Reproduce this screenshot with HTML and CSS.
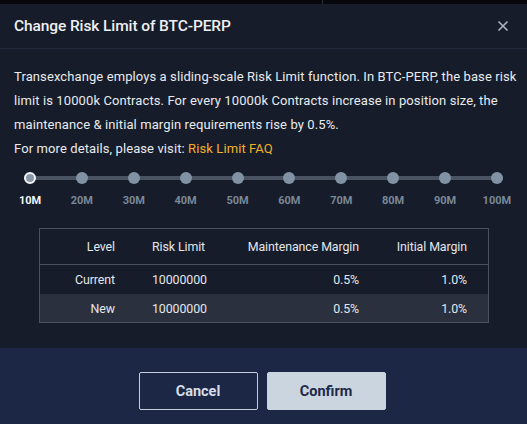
FILE: index.html
```html
<!DOCTYPE html>
<html>
<head>
<meta charset="utf-8">
<link rel="stylesheet" href="styles.css">
</head>
<body>
<div class="topbar"><div class="topbar-line"></div></div>
<div class="dialog">
  <div class="header">
    <div class="title">Change Risk Limit of BTC-PERP</div>
    <svg class="close" width="12" height="12" viewBox="0 0 12 12"><path d="M1.5 1.5 L10.5 10.5 M10.5 1.5 L1.5 10.5" stroke="#aab4c2" stroke-width="1.6" fill="none"/></svg>
  </div>
  <div class="body">
    <p class="desc">Transexchange employs a sliding-scale Risk Limit function. In BTC-PERP, the base risk limit is 10000k Contracts. For every 10000k Contracts increase in position size, the maintenance &amp; initial margin requirements rise by 0.5%.<br>For more details, please visit: <span class="link">Risk Limit FAQ</span></p>
    <div class="slider">
      <div class="track">
        <span class="dot active"></span><span class="dot"></span><span class="dot"></span><span class="dot"></span><span class="dot"></span><span class="dot"></span><span class="dot"></span><span class="dot"></span><span class="dot"></span><span class="dot"></span>
      </div>
      <div class="labels">
        <span class="lbl active">10M</span><span class="lbl">20M</span><span class="lbl">30M</span><span class="lbl">40M</span><span class="lbl">50M</span><span class="lbl">60M</span><span class="lbl">70M</span><span class="lbl">80M</span><span class="lbl">90M</span><span class="lbl">100M</span>
      </div>
    </div>
    <div class="table">
      <div class="row head">
        <div class="c1">Level</div><div class="c2">Risk Limit</div><div class="c3">Maintenance Margin</div><div class="c4">Initial Margin</div>
      </div>
      <div class="row">
        <div class="c1">Current</div><div class="c2">10000000</div><div class="c3">0.5%</div><div class="c4">1.0%</div>
      </div>
      <div class="row alt">
        <div class="c1">New</div><div class="c2">10000000</div><div class="c3">0.5%</div><div class="c4">1.0%</div>
      </div>
    </div>
  </div>
  <div class="footer">
    <button class="btn cancel">Cancel</button>
    <button class="btn confirm">Confirm</button>
  </div>
</div>
</body>
</html>
```
FILE: styles.css
```css
* { box-sizing: border-box; }
html, body { margin: 0; padding: 0; }
body {
  background: #000;
  font-family: Roboto, "Liberation Sans", sans-serif;
  color: #e6e9ee;
  width: 527px;
  height: 424px;
  overflow: hidden;
}
.topbar {
  height: 4px;
  padding-left: 322px;
  background: #05070a;
}
.topbar-line {
  width: 1px;
  height: 4px;
  background: #2a2f38;
}
.dialog {
  background: #161c29;
  height: 420px;
  display: flex;
  flex-direction: column;
}
.header {
  height: 45px;
  border-bottom: 1px solid #212b3d;
  display: flex;
  align-items: center;
  justify-content: space-between;
  padding: 0 18px 0 14px;
}
.title {
  font-size: 15.5px;
  font-weight: 500;
  color: #eef0f3;
  letter-spacing: -0.1px;
}
.close { display: block; }
.body {
  padding: 16px 0 0 0;
  flex: 1;
}
.desc {
  margin: 0;
  padding: 0 10px 0 14px;
  font-size: 13px;
  line-height: 24px;
  color: #e8ebef;
  letter-spacing: 0.1px;
}
.link { color: #f2b02a; }
.slider {
  padding: 11px 24px 0 24px;
}
.track {
  height: 12px;
  display: flex;
  justify-content: space-between;
  background: linear-gradient(#4a5361, #4a5361) no-repeat center / 100% 4px;
}
.dot {
  width: 12px;
  height: 12px;
  border-radius: 50%;
  background: #8292a5;
}
.dot.active {
  background: #8a97a8;
  border: 2px solid #f4f6f8;
}
.labels {
  display: flex;
  justify-content: space-between;
  margin-top: 10px;
}
.lbl {
  width: 12px;
  display: flex;
  justify-content: center;
  white-space: nowrap;
  font-size: 11px;
  font-weight: 700;
  color: #7a8898;
  line-height: 14px;
}
.lbl.active { color: #f2f4f7; }
.table {
  margin: 20px 38px 0 39px;
  border: 1px solid #465060;
  font-size: 12.4px;
  color: #e3e6ea;
  letter-spacing: -0.1px;
}
.row {
  display: grid;
  grid-template-columns: 75px 100px 144px 108px 20px;
  height: 29px;
  align-items: center;
}
.row.head {
  height: 36px;
  border-bottom: 1px solid #465060;
}
.row.alt { background: #2a303d; height: 28px; }
.c1 { text-align: right; }
.c2 { padding-left: 37px; }
.c3 { text-align: right; }
.c4 { text-align: right; }
.footer {
  height: 76px;
  background: #1b2744;
  display: flex;
  justify-content: center;
  align-items: flex-start;
  padding-top: 24px;
  gap: 9px;
  padding-right: 3px;
}
.btn {
  width: 119px;
  height: 38px;
  font-family: inherit;
  font-size: 14.5px;
  font-weight: 700;
  border-radius: 2px;
  padding: 0;
}
.cancel {
  background: transparent;
  border: 1px solid #c5cfdb;
  color: #d6dde6;
}
.confirm {
  background: #cbd5e0;
  border: 1px solid #cbd5e0;
  color: #1d2a48;
}
```
